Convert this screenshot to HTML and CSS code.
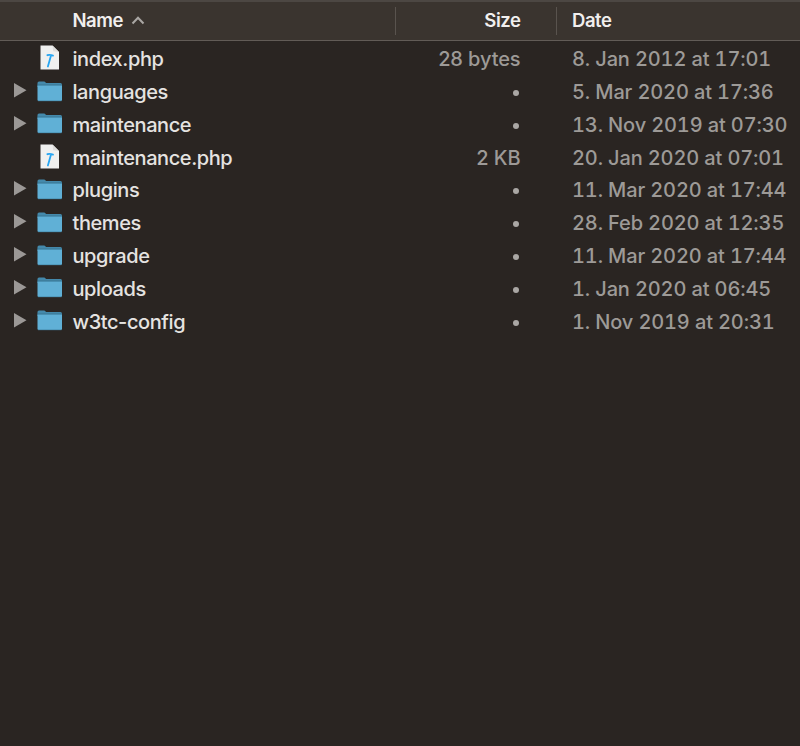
FILE: index.html
```html
<!DOCTYPE html>
<html lang="en">
<head>
<meta charset="utf-8">
<title>Files</title>
<link rel="stylesheet" href="styles.css">
</head>
<body>
<svg width="0" height="0" class="defs" aria-hidden="true">
  <symbol id="folder" viewBox="0 0 26 21">
    <path d="M.5 2Q.5.5 2 .5H7.2Q8.3.5 9 2H23.5Q25 2 25 3.5V6H.5Z" fill="#4489ab"/>
    <path d="M.5 4.5H25V18.8Q25 20 23.8 20H1.7Q.5 20 .5 18.8Z" fill="#60b0d6"/>
    <path d="M.5 3.9H25" stroke="#37718e" stroke-width=".7"/>
    <path d="M1 19.8H24.5" stroke="#3f809e" stroke-width=".6"/>
  </symbol>
  <symbol id="file" viewBox="0 0 20 25">
    <path d="M.5.5H12.5L19 7V24.5H.5Z" fill="#f0f0ef"/>
    <path d="M12.5.5L13.2 6.2L19 7Z" fill="#dedddb"/>
    <path d="M7.4 10.2Q9.8 9.2 13 10.6M11 10.4L7.9 21.5" fill="none" stroke="#26a5f2" stroke-width="1.8" stroke-linecap="round"/>
  </symbol>
  <symbol id="arrow" viewBox="0 0 13 15"><path d="M0 0L12.5 7.3L0 14.6Z" fill="#9b9896"/></symbol>
</svg>
<div class="header">
  <div class="name">Name <svg class="sort" viewBox="0 0 14 9"><path d="M1.5 7.5L7 1.8L12.5 7.5" fill="none" stroke="#aaa7a4" stroke-width="2"/></svg></div>
  <div class="size">Size</div>
  <div class="date">Date</div>
</div>
<div class="list">
  <div class="row"><span class="toggle"></span><svg class="file"><use href="#file"/></svg><span class="name">index.php</span><span class="size">28 bytes</span><span class="date">8. Jan 2012 at 17:01</span></div>
  <div class="row"><svg class="toggle"><use href="#arrow"/></svg><svg class="folder"><use href="#folder"/></svg><span class="name">languages</span><span class="size"><i class="dot"></i></span><span class="date">5. Mar 2020 at 17:36</span></div>
  <div class="row"><svg class="toggle"><use href="#arrow"/></svg><svg class="folder"><use href="#folder"/></svg><span class="name">maintenance</span><span class="size"><i class="dot"></i></span><span class="date">13. Nov 2019 at 07:30</span></div>
  <div class="row"><span class="toggle"></span><svg class="file"><use href="#file"/></svg><span class="name">maintenance.php</span><span class="size">2 KB</span><span class="date">20. Jan 2020 at 07:01</span></div>
  <div class="row"><svg class="toggle"><use href="#arrow"/></svg><svg class="folder"><use href="#folder"/></svg><span class="name">plugins</span><span class="size"><i class="dot"></i></span><span class="date">11. Mar 2020 at 17:44</span></div>
  <div class="row"><svg class="toggle"><use href="#arrow"/></svg><svg class="folder"><use href="#folder"/></svg><span class="name">themes</span><span class="size"><i class="dot"></i></span><span class="date">28. Feb 2020 at 12:35</span></div>
  <div class="row"><svg class="toggle"><use href="#arrow"/></svg><svg class="folder"><use href="#folder"/></svg><span class="name">upgrade</span><span class="size"><i class="dot"></i></span><span class="date">11. Mar 2020 at 17:44</span></div>
  <div class="row"><svg class="toggle"><use href="#arrow"/></svg><svg class="folder"><use href="#folder"/></svg><span class="name">uploads</span><span class="size"><i class="dot"></i></span><span class="date">1. Jan 2020 at 06:45</span></div>
  <div class="row"><svg class="toggle"><use href="#arrow"/></svg><svg class="folder"><use href="#folder"/></svg><span class="name">w3tc-config</span><span class="size"><i class="dot"></i></span><span class="date">1. Nov 2019 at 20:31</span></div>
</div>
</body>
</html>
```
FILE: styles.css
```css
* { box-sizing: border-box; }
body {
  margin: 0;
  height: 746px;
  overflow: hidden;
  background: #2a2522;
  color: #e5e3e1;
  font: 450 20px/24px Inter, "Liberation Sans", sans-serif;
  white-space: nowrap;
}
.defs { position: absolute; }
.header {
  display: grid;
  grid-template-columns: 395px 161px 1fr;
  align-items: center;
  height: 41px;
  border-top: 2px solid #4c4743;
  border-bottom: 1px solid #625c57;
  background: #3a342f;
  color: #f1efee;
  font-size: 18.5px;
  font-weight: 600;
  letter-spacing: -.45px;
}
.header > div { height: 28px; line-height: 27px; }
.header .name { padding-left: 72.5px; }
.header .size { border-left: 1px solid #59534e; padding-right: 35.5px; text-align: right; }
.header .date { border-left: 1px solid #59534e; padding-left: 15px; }
.sort { width: 14px; height: 9px; margin-left: 4px; vertical-align: 2px; }
.list { padding-top: 1.8px; }
.row {
  display: grid;
  grid-template-columns: 37px 35.5px 323.5px 125px 1fr;
  align-items: center;
  height: 32.8px;
}
.row .toggle { width: 13px; height: 15px; margin: 0 0 3px 14px; }
.folder { width: 26px; height: 21px; margin-bottom: 1.6px; }
.file { width: 20px; height: 25px; margin: 0 0 3px 3px; }
.row .name { letter-spacing: -.42px; }
.row .size { display: flex; justify-content: flex-end; align-items: center; height: 24px; padding-right: .5px; color: #9d9a97; letter-spacing: -.1px; }
.row .date { padding-left: 51px; color: #9d9a97; font-variant-numeric: tabular-nums; letter-spacing: -.14px; }
.dot { width: 6px; height: 6px; margin: 2px 1.5px 0 0; border-radius: 50%; background: #aaa7a4; }
```
